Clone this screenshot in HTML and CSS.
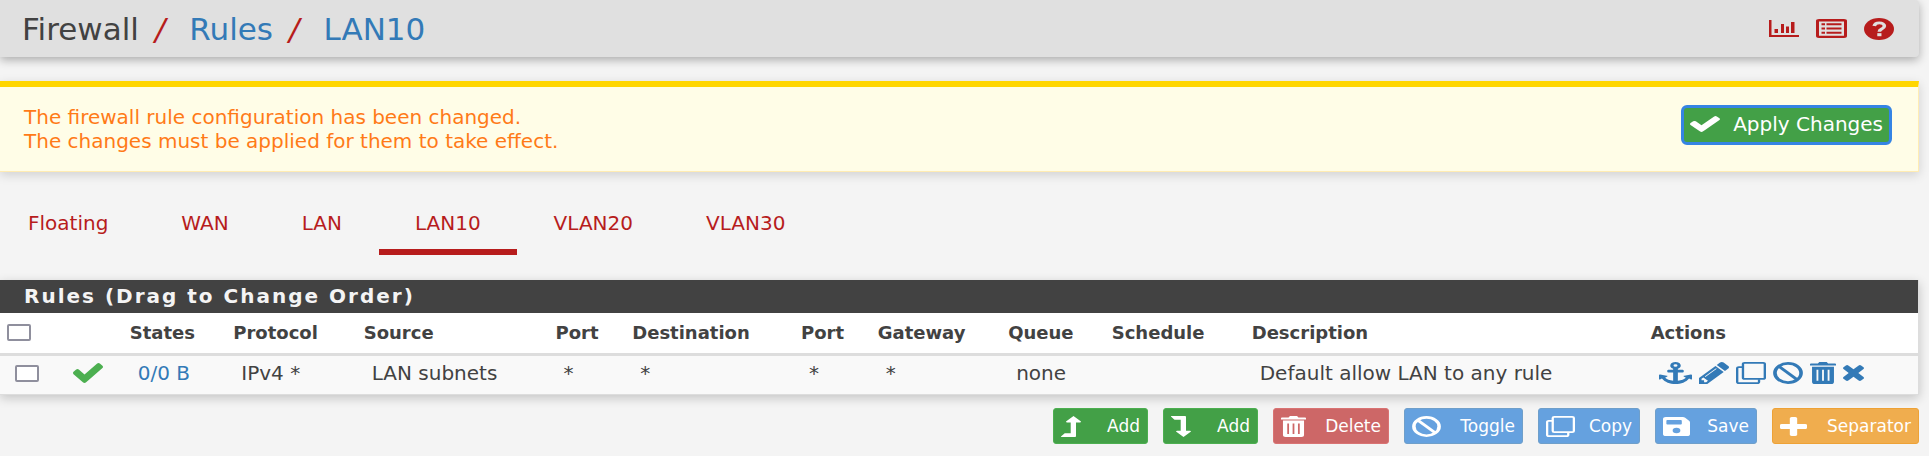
FILE: index.html
```html
<!DOCTYPE html>
<html lang="en">
<head>
<meta charset="utf-8">
<title>Firewall: Rules: LAN10</title>
<link rel="stylesheet" href="styles.css">
</head>
<body>
<svg class="sprite" aria-hidden="true">
  <symbol id="check" viewBox="121 334 1550 1188" preserveAspectRatio="none"><path d="M1671 566q0 40-28 68l-724 724-136 136q-28 28-68 28t-68-28l-136-136-362-362q-28-28-28-68t28-68l136-136q28-28 68-28t68 28l294 295 656-657q28-28 68-28t68 28l136 136q28 28 28 68z"/></symbol>
  <symbol id="times" viewBox="302 366 1188 1188" preserveAspectRatio="none"><path d="M1490 1322q0 40-28 68l-136 136q-28 28-68 28t-68-28l-294-294-294 294q-28 28-68 28t-68-28l-136-136q-28-28-28-68t28-68l294-294-294-294q-28-28-28-68t28-68l136-136q28-28 68-28t68 28l294 294 294-294q28-28 68-28t68 28l136 136q28 28 28 68t-28 68l-294 294 294 294q28 28 28 68z"/></symbol>
  <symbol id="plus" viewBox="192 192 1408 1408" preserveAspectRatio="none"><path d="M1600 800v192q0 40-28 68t-68 28h-416v416q0 40-28 68t-68 28h-192q-40 0-68-28t-28-68v-416h-416q-40 0-68-28t-28-68v-192q0-40 28-68t68-28h416v-416q0-40 28-68t68-28h192q40 0 68 28t28 68v416h416q40 0 68 28t28 68z"/></symbol>
  <symbol id="pencil" viewBox="128 149 1515 1515" preserveAspectRatio="none"><path d="M491 1536l91-91-235-235-91 91v107h128v128h107zm523-928q0-22-22-22-10 0-17 7l-542 542q-7 7-7 17 0 22 22 22 10 0 17-7l542-542q7-7 7-17zm-54-192l416 416-832 832h-416v-416zm683 96q0 53-37 90l-166 166-416-416 166-165q36-38 90-38 53 0 91 38l235 234q37 39 37 91z"/></symbol>
  <symbol id="anchor" viewBox="0 0 28 28" preserveAspectRatio="none"><path fill-rule="evenodd" d="M14 0a4.5 4.5 0 0 1 2 8.500V10h4a1 1 0 0 1 1 1v1.500a1 1 0 0 1-1 1h-4v10.300c3-.4 5.500-1.800 6.800-3.800L21 18.500c-.4-.6-.2-1 .5-1.100L27 16c.7 0 1 .3 1 1v4.500c0 .8-.7 1-1.200.5l-1.300-1.100C23 25.500 18.800 28 14 28S5 25.500 2.500 20.900L1.200 22C.7 22.500 0 22.300 0 21.500V17c0-.7.3-1 1-1l5.500 1.400c.7.1.9.5.5 1.100L5.200 20c1.300 2 3.800 3.400 6.800 3.800V13.500H8a1 1 0 0 1-1-1V11a1 1 0 0 1 1-1h4V8.500A4.500 4.500 0 0 1 14 0zm0 2.800a1.700 1.700 0 1 0 0 3.400 1.700 1.700 0 0 0 0-3.400z"/></symbol>
  <symbol id="clone" viewBox="0 0 28 28" preserveAspectRatio="none"><g fill="none" stroke="currentColor" stroke-width="2.200"><rect x="6.500" y="1.100" width="20.400" height="20.400" rx="1.500"/><path d="M6 6.500H2.600A1.500 1.500 0 0 0 1.100 8v17.400a1.500 1.500 0 0 0 1.500 1.500H20a1.500 1.500 0 0 0 1.500-1.500V22"/></g></symbol>
  <symbol id="ban" viewBox="0 0 28 28" preserveAspectRatio="none"><g fill="none" stroke="currentColor" stroke-width="3.400"><circle cx="14" cy="14" r="12.200"/><path d="M5.500 5.500l17 17"/></g></symbol>
  <symbol id="trash" viewBox="0 0 28 28" preserveAspectRatio="none"><path d="M8.500 2L10 0h8l1.500 2H27a1 1 0 0 1 1 1v1.500H0V3a1 1 0 0 1 1-1z"/><path fill-rule="evenodd" d="M2.200 6h23.600v19a3 3 0 0 1-3 3H5.200a3 3 0 0 1-3-3zM7 10v14h2V10zm6 0v14h2V10zm6 0v14h2V10z"/></symbol>
  <symbol id="save" viewBox="0 0 28 28" preserveAspectRatio="none"><path fill-rule="evenodd" d="M3 0h17.500c1 0 1.800.3 2.500 1l4 4.500c.7.700 1 1.500 1 2.500v17a3 3 0 0 1-3 3H3a3 3 0 0 1-3-3V3a3 3 0 0 1 3-3zm1.500 4.500a1 1 0 0 0-1 1V10a1 1 0 0 0 1 1h14a1 1 0 0 0 1-1V5.500a1 1 0 0 0-1-1zM14 16a4 4 0 1 0 0 8 4 4 0 0 0 0-8z"/></symbol>
  <symbol id="up" viewBox="0 0 20 28" preserveAspectRatio="none"><path d="M12.500 0L19.700 7c.5.700.3 1.500-.8 1.500H15V27a1 1 0 0 1-1 1H.600c-.7 0-.8-.5-.4-1l3-3.500c.3-.4.600-.5 1-.5H9.700V8.500H6.100C5 8.500 4.800 7.700 5.300 7z"/></symbol>
  <symbol id="down" viewBox="0 0 20 28" preserveAspectRatio="none"><path d="M12.500 28L19.700 21c.5-.7.3-1.500-.8-1.500H15V1a1 1 0 0 0-1-1H.600C-.1 0-.2.500.2 1l3 3.500c.3.400.600.500 1 .5H9.700v14.500H6.100c-1.100 0-1.300.8-.8 1.500z"/></symbol>
  <symbol id="chart" viewBox="0 0 30 17" preserveAspectRatio="none"><path d="M0 0h2.500v15H30v2H0zM5.500 9H9v4H5.500zm6.500-5h3v9h-3zm5 2.500h3V13h-3zM22 2h3.500v11H22z"/></symbol>
  <symbol id="list" viewBox="0 0 31 20" preserveAspectRatio="none"><path fill-rule="evenodd" d="M3 0h25a3 2 0 0 1 3 2v16a3 2 0 0 1-3 2H3a3 2 0 0 1-3-2V2a3 2 0 0 1 3-2zm0 2.500v15h25v-15z"/><path d="M5.500 4.500h3.500v2H5.500zm5 0h15v2h-15zm-5 4.500h3.500v2H5.500zm5 0h15v2h-15zm-5 4.500h3.500v2H5.500zm5 0h15v2h-15z"/></symbol>
  <symbol id="help" viewBox="0 0 28 28" preserveAspectRatio="none"><circle cx="14" cy="14" r="14"/><path d="M9.500 10.300C10 7.500 12 6.200 14.300 6.200c2.700 0 4.700 1.600 4.700 3.900 0 3.900-4.700 3.700-4.700 7.400" fill="none" stroke="#e0e0e0" stroke-width="3.400"/><path d="M12.400 19.300h3.900v3.900h-3.900z" fill="#e0e0e0"/></symbol>
</svg>

<header class="topbar">
  <nav class="crumbs" aria-label="Breadcrumb">
    <span>Firewall</span><i>/</i><a href="#rules">Rules</a><i>/</i><a href="#lan10">LAN10</a>
  </nav>
  <div class="tools">
    <a href="#status" aria-label="Status"><svg class="ico-chart"><use href="#chart"/></svg></a>
    <a href="#log" aria-label="Log"><svg class="ico-list"><use href="#list"/></svg></a>
    <a href="#help-page" aria-label="Help"><svg class="ico-help"><use href="#help"/></svg></a>
  </div>
</header>

<section class="notice">
  <p>The firewall rule configuration has been changed.<br>The changes must be applied for them to take effect.</p>
  <button type="button" class="apply"><svg><use href="#check"/></svg>Apply Changes</button>
</section>

<nav class="tabs" aria-label="Interfaces">
  <a href="#floating">Floating</a>
  <a href="#wan">WAN</a>
  <a href="#lan">LAN</a>
  <a href="#lan10" class="active">LAN10</a>
  <a href="#vlan20">VLAN20</a>
  <a href="#vlan30">VLAN30</a>
</nav>

<section class="panel">
  <h2>Rules (Drag to Change Order)</h2>
  <table>
    <colgroup>
      <col class="c-box"><col class="c-icon"><col class="c-states"><col class="c-proto"><col class="c-source"><col class="c-port"><col class="c-dest"><col class="c-port"><col class="c-gateway"><col class="c-queue"><col class="c-schedule"><col class="c-desc"><col class="c-actions">
    </colgroup>
    <thead>
      <tr>
        <th><input type="checkbox" aria-label="Select all rules"></th><th></th><th>States</th><th>Protocol</th><th>Source</th><th>Port</th><th>Destination</th><th>Port</th><th>Gateway</th><th>Queue</th><th>Schedule</th><th>Description</th><th>Actions</th>
      </tr>
    </thead>
    <tbody>
      <tr>
        <td><input type="checkbox" aria-label="Select rule"></td>
        <td><svg class="ico-pass"><use href="#check"/></svg></td>
        <td><a href="#states">0/0 B</a></td><td>IPv4 *</td><td>LAN subnets</td><td>*</td><td>*</td><td>*</td><td>*</td><td>none</td><td></td><td>Default allow LAN to any rule</td>
        <td>
          <div class="actions">
            <a href="#anchor-rule" aria-label="Move"><svg class="ico-anchor"><use href="#anchor"/></svg></a>
            <a href="#edit" aria-label="Edit"><svg><use href="#pencil"/></svg></a>
            <a href="#copy" aria-label="Copy"><svg><use href="#clone"/></svg></a>
            <a href="#disable" aria-label="Disable"><svg><use href="#ban"/></svg></a>
            <a href="#delete" aria-label="Delete"><svg class="ico-trash"><use href="#trash"/></svg></a>
            <a href="#kill" aria-label="Kill states"><svg class="ico-times"><use href="#times"/></svg></a>
          </div>
        </td>
      </tr>
    </tbody>
  </table>
</section>

<div class="buttons">
  <button type="button" class="btn add"><svg class="arrow"><use href="#up"/></svg>Add</button>
  <button type="button" class="btn add"><svg class="arrow"><use href="#down"/></svg>Add</button>
  <button type="button" class="btn delete"><svg class="trash"><use href="#trash"/></svg>Delete</button>
  <button type="button" class="btn toggle"><svg class="wide"><use href="#ban"/></svg>Toggle</button>
  <button type="button" class="btn copy"><svg class="wide"><use href="#clone"/></svg>Copy</button>
  <button type="button" class="btn save"><svg><use href="#save"/></svg>Save</button>
  <button type="button" class="btn separator"><svg><use href="#plus"/></svg>Separator</button>
</div>
</body>
</html>
```
FILE: styles.css
```css
* { box-sizing: border-box; }

body {
  margin: 0;
  padding-right: 10px;
  background: #f4f4f4;
  color: #424242;
  font: 20px/24px "DejaVu Sans", Roboto, sans-serif;
}

a { color: #337ab7; text-decoration: none; }
svg { display: block; fill: currentColor; }
.sprite { position: absolute; width: 0; height: 0; }

.topbar {
  display: flex;
  justify-content: space-between;
  align-items: center;
  height: 57px;
  padding: 0 25px 0 22px;
  border-radius: 0 4px 4px 0;
  background: #e0e0e0;
  box-shadow: 0 3px 10px rgba(0, 0, 0, .3);
}
.crumbs { display: flex; font-size: 31px; line-height: 36px; }
.crumbs i { margin: 0 24px 0 16px; color: #b71c1c; }
.tools { display: flex; align-items: center; gap: 17px; }
.tools a { color: #b71c1c; }
.ico-chart { width: 30px; height: 17px; }
.ico-list { width: 31px; height: 19px; }
.ico-help { width: 30px; height: 22px; }

.notice {
  display: flex;
  justify-content: space-between;
  align-items: flex-start;
  margin-top: 24px;
  padding: 18px 26px 18px 24px;
  border: solid #ffecb3;
  border-width: 6px 1px 1px 0;
  border-top-color: #ffd600;
  background: #fffde7;
  color: #ff7a17;
  box-shadow: 0 3px 10px rgba(0, 0, 0, .15);
}
.notice p { margin: 0; }
.apply {
  display: flex;
  align-items: center;
  justify-content: space-between;
  width: 211px;
  height: 40px;
  padding: 0 6px 2px;
  border: 3px solid #3584e4;
  border-radius: 6px;
  background: #43a047;
  color: #fff;
  font: inherit;
}
.apply svg { width: 30px; height: 16px; }

.tabs { display: flex; gap: 1px; margin-top: 31px; }
.tabs a {
  padding: 8px 36px 14px;
  border-bottom: 6px solid transparent;
  color: #b71c1c;
}
.tabs a:first-child { padding-left: 28px; }
.tabs a.active { border-color: #b71c1c; }

.panel {
  margin-top: 25px;
  border: solid #ddd;
  border-width: 0 1px 1px 0;
  background: #fff;
  box-shadow: 0 3px 10px rgba(0, 0, 0, .2);
}
h2 {
  margin: 0;
  padding: 4px 24px 5px;
  background: #424242;
  color: #f4f4f4;
  font-size: 20px;
  font-weight: 700;
  line-height: 24px;
  letter-spacing: 2px;
}
table { width: 100%; table-layout: fixed; border-collapse: collapse; }
th, td { text-align: left; vertical-align: middle; white-space: nowrap; }
th { height: 41px; padding: 0 0 0 7px; border-bottom: 3px solid #ddd; font-size: 18px; }
td { height: 40px; padding: 0 0 3px 15px; background: #f9f9f9; }
.c-box { width: 3%; }
.c-icon { width: 3.4%; }
.c-states { width: 5.4%; }
.c-proto { width: 6.8%; }
.c-source { width: 10%; }
.c-port { width: 4%; }
.c-dest { width: 8.8%; }
.c-gateway { width: 6.8%; }
.c-queue { width: 5.4%; }
.c-schedule { width: 7.3%; }
.c-desc { width: 20.8%; }
.c-actions { width: 14.3%; }

input {
  display: block;
  appearance: none;
  width: 24px;
  height: 17px;
  margin: 0;
  border: 2px solid #8f8f9d;
  border-radius: 2px;
  background: #fff;
}
.ico-pass { width: 30px; height: 20px; color: #4caf50; }
.actions { display: flex; align-items: center; gap: 7px; }
.actions svg { width: 30px; height: 22px; }
.actions .ico-anchor { width: 33px; }
.actions .ico-trash { width: 26px; }
.actions .ico-times { width: 21px; height: 16px; }

.buttons { display: flex; justify-content: flex-end; gap: 15px; margin-top: 13px; }
.btn {
  display: flex;
  align-items: center;
  justify-content: space-between;
  height: 36px;
  padding: 0 7px;
  border: 1px solid;
  border-radius: 3px;
  color: #fff;
  font: 17px/20px "DejaVu Sans", Roboto, sans-serif;
}
.btn svg { width: 27px; height: 19px; }
.btn .arrow { width: 20px; height: 21px; }
.btn .trash { width: 25px; height: 21px; }
.btn .wide { width: 29px; height: 21px; }
.add { width: 95px; border-color: #4caf50; background: #43a047; }
.delete { width: 116px; border-color: #d97373; background: #cd6767; }
.toggle { width: 119px; }
.copy, .save { width: 102px; }
.toggle, .copy, .save { border-color: #6f9fca; background: #65a1df; }
.separator { width: 147px; border-color: #eea236; background: #f0ad4e; }
```
